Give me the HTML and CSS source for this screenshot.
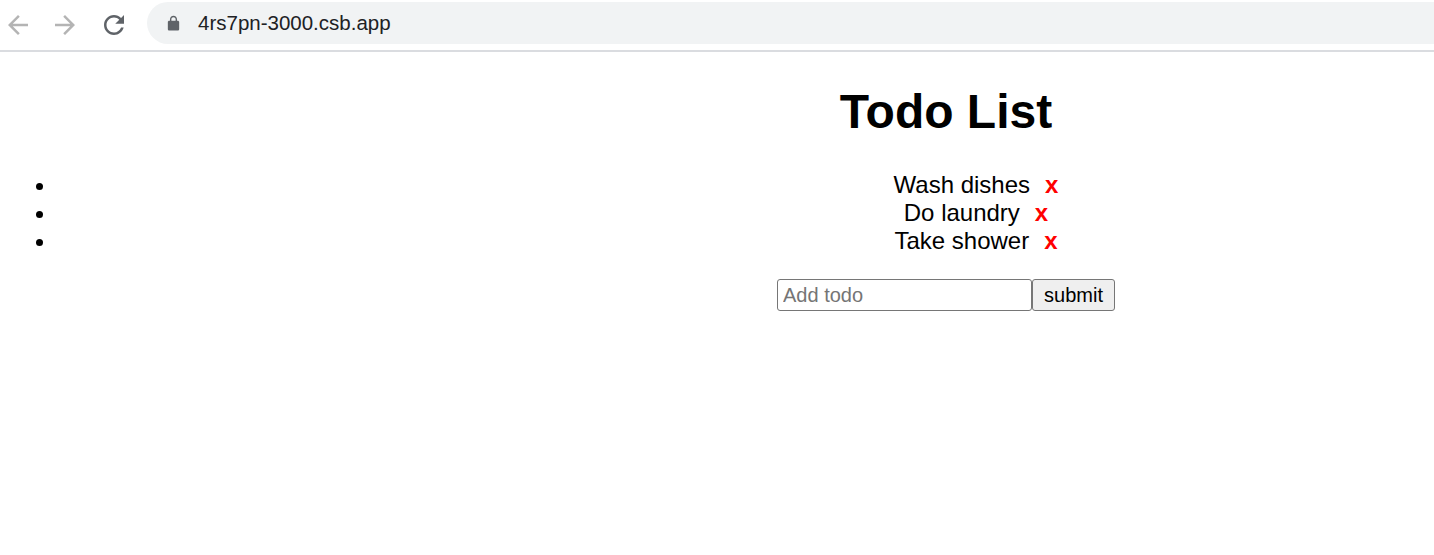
FILE: index.html
```html
<!DOCTYPE html>
<html>
<head>
<meta charset="utf-8">
<link rel="stylesheet" href="styles.css">
</head>
<body>
<div class="chrome">
  <div class="nav">
    <svg class="ico ico-dim" viewBox="0 0 24 24"><path d="M20 11H7.83l5.59-5.59L12 4l-8 8 8 8 1.41-1.41L7.830 13H20v-2z"/></svg>
    <svg class="ico ico-dim fwd" viewBox="0 0 24 24"><path d="M12 4l-1.41 1.41L16.17 11H4v2h12.17l-5.58 5.59L12 20l8-8z"/></svg>
    <svg class="ico reload" viewBox="0 0 24 24"><path d="M17.65 6.35C16.2 4.9 14.21 4 12 4c-4.42 0-7.99 3.58-7.99 8s3.57 8 7.99 8c3.73 0 6.84-2.55 7.73-6h-2.08c-.82 2.33-3.04 4-5.650 4-3.31 0-6-2.690-6-6s2.69-6 6-6c1.66 0 3.14.69 4.22 1.78L13 11h7V4l-2.35 2.35z"/></svg>
  </div>
  <div class="omnibox">
    <svg class="lock" viewBox="0 0 24 24"><path d="M18 8h-1V6c0-2.76-2.24-5-5-5S7 3.24 7 6v2H6c-1.1 0-2 .9-2 2v10c0 1.1.9 2 2 2h12c1.1 0 2-.9 2-2V10c0-1.1-.9-2-2-2zM9 6c0-1.66 1.34-3 3-3s3 1.34 3 3v2H9V6z"/></svg>
    <span class="url">4rs7pn-3000.csb.app</span>
  </div>
</div>
<div class="viewport">
  <div class="page">
    <h1 class="title">Todo List</h1>
    <ul class="todos">
      <li class="todo">Wash dishes<span class="del">x</span></li>
      <li class="todo">Do laundry<span class="del">x</span></li>
      <li class="todo">Take shower<span class="del">x</span></li>
    </ul>
    <form class="add">
      <input class="field" type="text" placeholder="Add todo"><button class="submit" type="button">submit</button>
    </form>
  </div>
</div>
</body>
</html>
```

FILE: styles.css
```css
html, body {
  margin: 0;
  padding: 0;
  background: #fff;
  overflow: hidden;
}
body {
  width: 1434px;
  height: 555px;
  font-family: "Liberation Sans", Arial, sans-serif;
}
.chrome {
  height: 50px;
  border-bottom: 2px solid #dadce0;
  display: flex;
  align-items: center;
  background: #fff;
}
.nav {
  display: flex;
  align-items: center;
  padding-left: 3px;
}
.ico {
  width: 30px;
  height: 30px;
  fill: #5f6368;
  display: block;
}
.ico-dim {
  fill: #b4b4b4;
}
.fwd {
  margin-left: 17px;
}
.reload {
  margin-left: 19px;
}
.omnibox {
  margin-left: 18px;
  flex: 1;
  height: 42px;
  margin-top: -4px;
  background: #f1f3f4;
  border-radius: 21px 0 0 21px;
  display: flex;
  align-items: center;
  padding-left: 18px;
}
.lock {
  width: 17px;
  height: 17px;
  fill: #5f6368;
}
.url {
  margin-left: 16px;
  font-size: 20.5px;
  color: #202124;
  font-family: "Liberation Sans", Arial, sans-serif;
}
.viewport {
  height: 503px;
  overflow: hidden;
}
.page {
  width: 1868px;
  padding: 0 12px;
  text-align: center;
  display: flow-root;
}
.title {
  font-size: 48px;
  font-weight: bold;
  margin: 32px 0;
  line-height: 55px;
}
.todos {
  margin: 32px 0 24px;
  padding-left: 45px;
  font-size: 24px;
  line-height: 28px;
}
.todo {
  height: 28px;
  padding-left: 15px;
}
.del {
  color: #f00;
  font-weight: bold;
  margin-left: 15px;
}
.add {
  display: flex;
  justify-content: center;
  margin: 0;
}
.field {
  box-sizing: border-box;
  width: 255px;
  height: 32px;
  border: 1px solid #767676;
  border-radius: 3px;
  padding: 0 5px;
  font-size: 20px;
  font-family: "Liberation Sans", Arial, sans-serif;
  margin: 0;
}
.field::placeholder {
  color: #757575;
}
.submit {
  box-sizing: border-box;
  width: 83px;
  height: 32px;
  border: 1px solid #767676;
  border-radius: 3px;
  background: #efefef;
  font-size: 20px;
  font-family: "Liberation Sans", Arial, sans-serif;
  color: #000;
  margin: 0;
  padding: 0;
}
```
